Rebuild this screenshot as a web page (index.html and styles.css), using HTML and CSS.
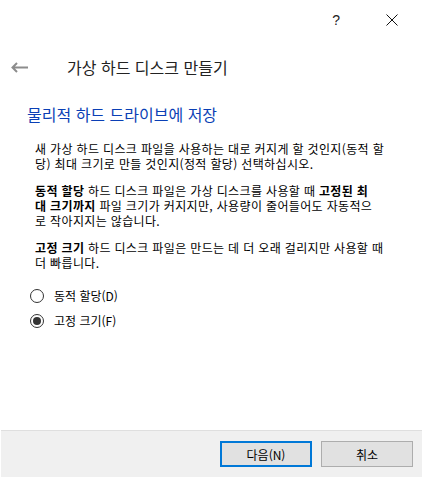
FILE: index.html
```html
<!DOCTYPE html>
<html lang="ko">
<head>
  <meta charset="UTF-8" />
  <meta name="viewport" content="width=device-width, initial-scale=1.0" />
  <title>가상 하드 디스크 만들기</title>
  <link rel="stylesheet" href="styles.css">
</head>
<body>
  <div class="window">
    <div class="titlebar">
      <span class="help-btn">?</span>
      <span class="close-btn">
        <svg width="12" height="12" viewBox="0 0 12 12">
          <path d="M0.5 0.5 L11.5 11.5 M11.5 0.5 L0.5 11.5" stroke="#111" stroke-width="1" fill="none" />
        </svg>
      </span>
    </div>

    <div class="header">
      <span class="back-btn">
        <svg width="17" height="11" viewBox="0 0 17 11">
          <path d="M1.5 5.5 H17 M6 1 L1.5 5.5 L6 10" stroke="#8c8c8c" stroke-width="2" fill="none" />
        </svg>
      </span>
      <h1 class="title">가상 하드 디스크 만들기</h1>
    </div>

    <main class="main">
      <h2 class="instruction">물리적 하드 드라이브에 저장</h2>

      <div class="desc">
        <p>새 가상 하드 디스크 파일을 사용하는 대로 커지게 할 것인지(동적 할<br>당) 최대 크기로 만들 것인지(정적 할당) 선택하십시오.</p>
        <p><strong>동적 할당</strong> 하드 디스크 파일은 가상 디스크를 사용할 때 <strong>고정된 최<br>대 크기까지</strong> 파일 크기가 커지지만, 사용량이 줄어들어도 자동적으<br>로 작아지지는 않습니다.</p>
        <p><strong>고정 크기</strong> 하드 디스크 파일은 만드는 데 더 오래 걸리지만 사용할 때<br>더 빠릅니다.</p>
      </div>

      <div class="options">
        <label class="option">
          <input type="radio" name="alloc" />
          <span class="radio"></span>
          <span>동적 할당(D)</span>
        </label>
        <label class="option">
          <input type="radio" name="alloc" checked />
          <span class="radio"></span>
          <span>고정 크기(F)</span>
        </label>
      </div>
    </main>

    <footer class="footer">
      <button class="btn btn-default">다음(N)</button>
      <button class="btn">취소</button>
    </footer>
  </div>
</body>
</html>
```

FILE: styles.css
```css
body {
  margin: 0;
  padding: 0;
  background: #fff;
  font-family: "Noto Sans CJK KR", "Liberation Sans", sans-serif;
  color: #000;
}

.window {
  width: 423px;
  height: 478px;
  display: flex;
  flex-direction: column;
  box-sizing: border-box;
  border-left: 1px solid #fff;
  border-right: 1px solid #fff;
  border-bottom: 1px solid #fff;
}

.titlebar {
  height: 40px;
  display: flex;
  align-items: center;
  justify-content: flex-end;
}

.help-btn {
  font-family: "Liberation Sans", sans-serif;
  font-size: 14px;
  color: #222;
  margin-right: 46px;
}

.close-btn {
  display: flex;
  margin-right: 24px;
}

.header {
  height: 54px;
  display: flex;
  align-items: center;
}

.back-btn {
  display: flex;
  margin-left: 10px;
  width: 56px;
}

.title {
  margin: 0;
  font-size: 16px;
  font-weight: normal;
  color: #222;
}

.main {
  flex: 1;
  padding-left: 26px;
}

.instruction {
  margin: 9px 0 16px;
  font-size: 16px;
  font-weight: normal;
  color: #0a3fb5;
  line-height: 22px;
}

.desc {
  padding-left: 8px;
  font-size: 12px;
  line-height: 15px;
  letter-spacing: 0.35px;
}

.desc p {
  margin: 0 0 12px;
  white-space: nowrap;
}

.desc strong {
  font-weight: bold;
}

.options {
  display: flex;
  flex-direction: column;
  gap: 10px;
  padding-left: 3px;
  margin-top: 18px;
}

.option {
  display: flex;
  align-items: center;
  gap: 10px;
  font-size: 12px;
  height: 15px;
}

.option input {
  display: none;
}

.radio {
  width: 12px;
  height: 12px;
  border: 1px solid #333;
  border-radius: 50%;
  background: #fff;
  position: relative;
}

.option input:checked + .radio::after {
  content: "";
  position: absolute;
  left: 2px;
  top: 2px;
  width: 8px;
  height: 8px;
  border-radius: 50%;
  background: #333;
}

.footer {
  height: 46px;
  background: #f0f0f0;
  border-top: 1px solid #dfdfdf;
  display: flex;
  align-items: center;
  justify-content: flex-end;
  gap: 9px;
  padding-right: 9px;
}

.btn {
  width: 92px;
  height: 26px;
  box-sizing: border-box;
  background: #e1e1e1;
  border: 1px solid #adadad;
  font-family: "Noto Sans CJK KR", "Liberation Sans", sans-serif;
  font-size: 12px;
  color: #000;
  padding: 0;
}

.btn-default {
  border: 2px solid #0078d7;
}
```
